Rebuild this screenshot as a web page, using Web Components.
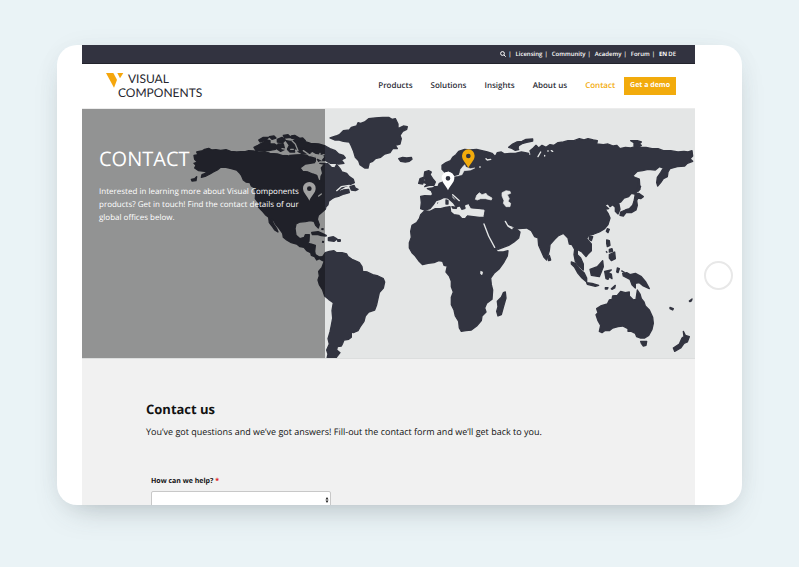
<!DOCTYPE html>
<html lang="en">
<head>
<meta charset="utf-8">
<meta name="viewport" content="width=device-width, initial-scale=1">
<title>Contact - Visual Components</title>
<style>
  :root {
    --dark: #323340;
    --accent: #f2ab0c;
    --land: #323440;
    --sea: #e4e6e6;
  }
  * { box-sizing: border-box; }
  body {
    margin: 0;
    height: 100vh;
    padding: 45px 57px 62px;
    background: #eaf3f6;
    font-family: "Open Sans", "Noto Sans", sans-serif;
    text-rendering: geometricPrecision;
    color: #111;
  }
</style>
</head>
<body>
  <tablet-frame>
    <top-bar></top-bar>
    <site-header></site-header>
    <contact-hero>
      <h1 slot="title">CONTACT</h1>
      <p slot="text">Interested in learning more about Visual Components products? Get in touch! Find the contact details of our global offices below.</p>
    </contact-hero>
    <contact-form>
      <h2 slot="title">Contact us</h2>
      <p slot="intro">You’ve got questions and we’ve got answers! Fill-out the contact form and we’ll get back to you.</p>
    </contact-form>
  </tablet-frame>

<script>
class TabletFrame extends HTMLElement {
  connectedCallback() {
    this.attachShadow({ mode: 'open' });
    this.shadowRoot.innerHTML = `
      <style>
        :host {
          display: grid;
          grid-template-columns: 25px 1fr 47px;
          height: 100%;
          background: white;
          border-radius: 20px;
          box-shadow: 0 14px 32px -14px rgba(60, 70, 75, 0.34), 0 0 30px -10px rgba(60, 70, 75, 0.1);
        }
        .screen {
          grid-column: 2;
          overflow: hidden;
          background: #f1f1f1;
        }
        button {
          place-self: center;
          width: 29px;
          height: 29px;
          padding: 0;
          border: 2px solid #e8e8e8;
          border-radius: 50%;
          background: white;
        }
      </style>
      <div class="screen"><slot></slot></div>
      <button type="button" aria-label="Home"></button>
    `;
  }
}
customElements.define('tablet-frame', TabletFrame);

class TopBar extends HTMLElement {
  connectedCallback() {
    this.attachShadow({ mode: 'open' });
    this.shadowRoot.innerHTML = `
      <style>
        :host {
          display: block;
          background: var(--dark);
          border-bottom: 1px solid #22232c;
        }
        nav {
          display: flex;
          justify-content: flex-end;
          align-items: center;
          gap: 4px;
          height: 18px;
          padding-right: 19px;
          font-size: 6px;
          font-weight: 600;
          color: white;
        }
        a { color: inherit; text-decoration: none; }
        nav > a + span { margin-left: -2px; }
        .lang { display: flex; gap: 1px; }
        .lang b { font-weight: 700; }
        svg { display: block; }
      </style>
      <nav aria-label="Secondary">
        <a href="#search" aria-label="Search">
          <svg width="6" height="6" viewBox="0 0 12 12" fill="none" stroke="currentColor" stroke-width="2">
            <circle cx="5" cy="5" r="3.8"/><path d="M8 8l3.4 3.4"/>
          </svg>
        </a>
        <span>|</span>
        <a href="#licensing">Licensing</a>
        <span>|</span>
        <a href="#community">Community</a>
        <span>|</span>
        <a href="#academy">Academy</a>
        <span>|</span>
        <a href="#forum">Forum</a>
        <span>|</span>
        <span class="lang"><a href="#en"><b>EN</b></a><a href="#de">DE</a></span>
      </nav>
    `;
  }
}
customElements.define('top-bar', TopBar);

class SiteHeader extends HTMLElement {
  connectedCallback() {
    this.attachShadow({ mode: 'open' });
    this.shadowRoot.innerHTML = `
      <style>
        :host {
          display: flex;
          justify-content: space-between;
          align-items: center;
          height: 45px;
          padding: 0 19px 0 24px;
          background: white;
          border-bottom: 1px solid #ececec;
        }
        .logo {
          display: grid;
          grid-template-columns: 12px auto;
          color: #26272f;
          font-family: Lato, "Noto Sans", sans-serif;
          font-size: 12px;
          line-height: 14px;
          text-decoration: none;
        }
        .logo svg { grid-row: 1 / 3; display: block; }
        .logo .top { padding-left: 10px; }
        nav {
          display: flex;
          align-items: center;
          gap: 18px;
          font-size: 8px;
          line-height: 18px;
          font-weight: 600;
        }
        nav a { color: #2c2d36; text-decoration: none; }
        nav a[aria-current] { color: var(--accent); }
        .demo {
          margin-left: -9px;
          padding: 0 6px;
          font-size: 7px;
          font-weight: 700;
          background: var(--accent);
        }
        nav a.demo { color: white; }
      </style>
      <a class="logo" href="#home">
        <svg width="18" height="17" viewBox="0 0 54 51" fill="#f5a60c">
          <path d="M0 3h22l11 20-9 24z"/><path d="M34 3h18l-10 16z"/>
        </svg>
        <span class="top">VISUAL</span>
        <span>COMPONENTS</span>
      </a>
      <nav aria-label="Main">
        <a href="#products">Products</a>
        <a href="#solutions">Solutions</a>
        <a href="#insights">Insights</a>
        <a href="#about">About us</a>
        <a href="#contact" aria-current="page">Contact</a>
        <a class="demo" href="#demo">Get a demo</a>
      </nav>
    `;
  }
}
customElements.define('site-header', SiteHeader);

class WorldMap extends HTMLElement {
  connectedCallback() {
    this.attachShadow({ mode: 'open' });
    this.shadowRoot.innerHTML = `
      <style>
        :host { display: block; background: var(--sea); }
        svg { display: block; width: 100%; }
        .land { fill: var(--land); stroke: var(--land); stroke-width: 4; stroke-linejoin: round; }
        .water { fill: var(--sea); stroke: var(--sea); stroke-width: 2; stroke-linejoin: round; }
        .line { fill: none; stroke: var(--sea); stroke-width: 4; stroke-linecap: round; }
      </style>
      <svg viewBox="0 0 1839 747" role="img" aria-label="World map with office locations">
        <defs>
          <path id="pin" fill-rule="evenodd" d="M0 0C-5-14-19-22-19-37a19 19 0 0 1 38 0C19-22 5-14 0 0zM0-43a7 7 0 1 0 0 14 7 7 0 0 0 0-14z"/>
        </defs>

        <!-- Americas -->
        <g transform="translate(324 -3)">
          <g class="land">
            <path d="M12 142L24 140 20 132 38 128 44 124 56 121 66 126 78 125 92 127 108 125 122 130 140 132 152 131 166 131 176 128 190 129 206 132 225 131 240 136 262 138 278 143 300 142 318 141 335 140 350 142 364 150 374 164 346 168 330 180 338 190 354 192 368 198 380 202 385 216 392 220 393 205 398 196 394 180 400 172 412 166 424 178 434 180 440 170 450 182 456 192 470 196 478 206 490 214 493 224 480 230 464 236 450 244 444 252 460 246 476 244 478 254 462 258 448 264 436 267 426 272 416 280 414 290 408 296 406 304 394 314 385 322 382 334 388 350 385 360 377 352 372 340 360 338 346 341 330 342 318 348 315 362 318 382 330 392 343 388 346 380 358 380 357 400 352 404 362 408 376 412 374 430 376 440 388 447 400 446 398 458 388 452 380 456 374 446 364 442 362 434 350 428 342 418 330 416 320 408 304 404 290 396 280 388 278 376 268 362 258 350 250 336 244 334 252 350 260 362 264 372 254 366 246 354 238 344 236 328 226 320 216 308 206 298 205 284 196 272 197 256 194 240 184 234 180 224 168 222 160 216 154 202 148 194 140 186 124 182 108 178 92 178 82 186 70 192 60 198 48 204 34 208 36 200 52 194 44 190 26 188 14 180 18 172 12 166 22 162 14 154Z"/>
            <path d="M20 206l-6 6-10 2 2 5 12-1z"/>
            <path d="M192 118l12-6 14-8 12-8 10 2 0 10 14 0 10 6-8 10-20 4-20-2-18 2z"/>
            <path d="M206 96l14-8 16 0-8 8-18 6zM238 86l14-2 6 6-12 4zM262 94l14-6 10 8-8 8-16-2zM280 82l14-2 8 8-18 2zM264 108l16 0 4 16-12 6-12-8zM288 98l14 2 18-4 12 6 16 0 14 4 24 2-2 12-22 2 2 10-22 4-8-10-20-4-14-8zM304 84l10-2 14 8-10 4-14-4zM322 92l16-2 8 8-16 2zM298 112l12 4 4 16-14 0-8-8zM326 118l18 4 16 14-22 2-14-8zM366 108l20 0 20 6 14 8 16 6 10 10 14 4 6 8-12 6 8 10-16 2-10-2-14 0-10-6-14-4 8-10-12-8-16-2-14-8zM382 154l12 6 10 0 4 10-18-4zM362 144l14 4 0 12-12-4z"/>
            <path d="M420 90L438 84 448 80 460 68 478 66 484 58 500 54 504 44 512 46 524 42 536 32 556 30 578 28 596 28 606 34 616 32 624 48 624 62 640 54 652 56 650 64 638 70 630 82 634 92 630 108 616 112 622 122 608 122 600 134 584 138 572 148 556 152 548 160 538 164 534 180 524 180 510 170 506 158 496 148 490 128 484 114 478 102 460 100 448 96 434 96Z"/>
            <path d="M626 152l12-4 12 2 14-2 2 6-8 6-12 2-14-2zM480 236l12-4 4 8 8 4-8 4-12-2z"/>
            <path d="M366 374l18-2 12 5 12 6-14-1-12-4-14 1zM416 390l14-3 10 6-8 6-16-2zM444 396l6 0 0 3-6 0zM394 363l7 1M396 401l6 1" stroke-width="6"/>
            <path d="M398 446L406 434 418 430 432 428 440 434 456 434 470 438 474 446 486 454 500 460 508 464 516 476 518 490 532 492 548 500 564 504 580 512 584 522 580 540 568 554 564 572 560 590 554 606 536 612 526 624 522 640 512 654 504 668 490 674 484 672 484 688 476 694 462 696 458 706 454 714 442 716 440 726 450 734 442 744 434 756 410 756 414 738 410 726 418 708 414 692 420 672 424 652 428 630 426 608 430 584 416 574 404 564 398 546 388 530 384 516 388 504 386 490 396 478 402 462Z"/>
          </g>
          <path class="line" d="M276 122l12 2-4 12 12 4M302 124l8 0M306 98l10 10 8 20M340 128l20 14 20 6 22-8M378 168l12-6 16 0M388 150l2-14"/>
          <path class="line" stroke-width="2" d="M386 264l8-6M440 248l14-12 24-4"/>
        </g>

        <!-- Europe, Africa and mainland Asia -->
        <g transform="translate(924 -3)">
          <g class="land">
            <path d="M92 265L104 263 124 264 128 258 124 248 112 242 128 240 134 236 144 236 148 226 158 222 162 206 170 202 190 208 206 206 216 198 222 188 230 184 234 178 226 176 218 172 212 184 206 198 194 202 184 200 178 188 164 192 156 184 156 172 168 164 182 158 188 148 198 140 206 130 224 124 240 126 260 124 276 128 292 132 306 136 316 146 322 134 334 132 344 138 360 136 376 136 394 132 406 134 416 136 414 144 424 140 420 128 430 120 438 112 446 120 456 112 468 118 480 110 492 112 504 104 520 102 534 98 552 98 568 92 582 96 594 92 610 96 622 98 620 108 640 110 654 108 670 114 680 112 690 122 706 118 722 120 736 116 752 118 768 118 786 122 804 122 820 128 842 128 864 132 882 130 894 132 906 128 908 144 900 152 908 160 892 166 884 174 862 176 840 182 834 192 832 206 820 212 812 224 803 234 800 224 802 208 812 194 820 180 808 176 796 186 774 184 758 188 742 190 728 204 738 210 748 214 744 228 752 236 742 250 734 258 724 256 716 266 702 270 692 282 686 284 690 304 684 318 676 310 676 298 668 290 660 296 654 286 644 292 656 302 646 304 654 316 660 330 654 350 644 362 628 372 612 378 596 382 590 392 604 408 604 428 594 438 588 446 576 432 562 424 562 440 572 450 580 468 580 486 566 474 556 460 552 440 554 424 546 410 538 408 534 390 520 376 504 384 494 394 480 410 478 428 474 442 470 456 462 448 454 430 446 412 444 390 434 386 424 368 410 360 386 362 372 356 356 350 346 338 352 354 362 362 376 360 390 372 386 390 372 402 356 412 340 418 324 424 316 420 304 396 292 370 283 348 284 330 282 322 286 306 274 304 260 300 248 302 240 298 238 286 230 288 222 292 226 302 216 304 210 294 204 282 190 264 180 262 190 274 206 286 208 294 198 296 190 284 174 270 162 268 150 274 138 278 130 290 120 302 104 306 92 302 94 284Z"/>
            <path d="M104 308L120 310 136 302 152 302 166 298 180 296 182 312 192 320 206 322 216 332 226 332 232 324 250 326 268 328 281 328 284 350 298 382 312 410 322 432 340 432 354 428 352 444 342 462 328 482 312 496 302 510 304 530 308 546 306 574 290 586 284 600 288 612 276 624 274 638 260 654 244 666 228 668 214 670 208 660 206 640 196 624 192 606 184 590 184 568 190 552 184 536 184 520 178 504 168 492 172 474 162 472 158 460 146 458 132 464 114 466 98 470 86 458 76 444 66 434 58 420 58 404 64 388 62 370 66 352 80 344 88 332 92 320Z"/>
            <path d="M346 552l2 18-8 28-6 22-10 4-4-14 4-14-2-16 12-12 6-14zM104 192l12-4 8 4-4 8 8 12 8 10-4 10-14 0-14 4 8-8-10-4 6-8-6-8zM90 212l10-4 2 8-4 12-12-2zM168 276l6 2 0 10-6 0zM186 296l14 2-2 4-10-2zM142 284l2 2"/>
            <path d="M356 118l12-10 12-6 16-2 12-6 20-1 0 6-18 4-14 4-10 6-2 8 2 4-10 2-10-6z"/>
            <path d="M478 442l4 14-6 2-2-10z"/>
          </g>
          <g class="water">
            <path d="M256 274l4-12 8-8 8 6 12-4 4 6 14 8-2 6-18-4-14 0-10 4z"/>
            <path d="M336 254l12-6 12 2 2 6-10 4 6 12-4 8 8 6-2 10-12 0-8-10 2-8-6-14z"/>
            <path d="M194 304l18 4 12-2 12-14 6 10 16 2 24 2-2 16-26-2-20-2-8 8-8-2-8-8-14-4z"/>
            <path d="M212 184l12-14 4 8 14 4 12-2-12 6-20 2-6 12-8 2zM272 490l6 2-2 8-4-2z"/>
          </g>
          <path class="line" d="M282 348q12 38 32 70M346 340l8 14 12 8M288 152l4 4 10-2M188 260l20 18M270 176l0 2M444 146l8-14M464 142l0 2M474 128l0 2M484 128l4 2"/>
        </g>

        <!-- Pacific Asia and Oceania -->
        <g class="land" transform="translate(1374 -3)">
          <path d="M272 98l20 0 12 4-6 6 6 4-10 6-12-4 0-10zM286 256l10 0 14 10-8 6-8-2-4 8 2 14-4 14-14 8-16 0-8 10-10-2 2-10 14-6 12-4 10-10 4-12 2-10zM290 210l8 4 2 30-6 6-4-12zM202 362l6 2-4 10-5-4zM148 384l10 2-4 12-6-4z"/>
          <path d="M200 396l8 2 2 14-8 4-2-10zM208 424l8-2 2 8-10 2zM198 430l4 4M208 440l16-8 2 20-12 6-6-8zM188 458l2 18-12 30-24-4-4-18 22-8zM194 490l20-4-10 8 10 4 2 14-8-6-4 8-6-2zM232 480l6 2-4 12-4-2zM244 488l10 6M94 462l12 4 10 14 16 14 8 16 0 12-14-12-12-14-10-18-10-10zM140 524l16 2 20 6-10 3-24-6zM196 539l8 0-2 4-6 0zM214 542l12-10-2 8-8 4z"/>
          <path d="M248 496l12-2 10 6 16-4 18 10 12 14 12 22-18-8-12-10-12 2 0 14-10-10-6-16-20-10z"/>
          <path d="M170 602L182 594 202 588 208 576 216 574 218 564 232 562 242 550 256 554 268 552 268 564 280 576 288 574 292 546 300 558 304 572 312 582 316 594 328 606 338 628 340 646 336 664 326 682 314 690 302 690 290 686 286 676 274 670 264 670 264 662 248 654 234 656 218 660 208 668 194 668 186 674 178 670 182 652 174 638 168 620 174 614Z"/>
          <path d="M302 700l18 0-2 12-8 2-6-8zM430 670l6 12 12 4-6 16-10 4-10 14-18 10-4-10 18-12 8-18 6-4zM390 598l10 4-2 4-8-4zM448 579l8-6-2 6-4 2z"/>
        </g>

        <use href="#pin" x="682" y="275" fill="#fff"/>
        <use href="#pin" x="1098" y="244" fill="#fff"/>
        <use href="#pin" x="1159" y="177" fill="#f2ab0c"/>
      </svg>
    `;
  }
}
customElements.define('world-map', WorldMap);

class ContactHero extends HTMLElement {
  connectedCallback() {
    this.attachShadow({ mode: 'open' });
    this.shadowRoot.innerHTML = `
      <style>
        :host {
          display: grid;
          grid-template-columns: 243fr 370fr;
          border-bottom: 1px solid #dcdede;
        }
        world-map { grid-area: 1 / 1 / 2 / 3; }
        .panel {
          grid-area: 1 / 1;
          z-index: 1;
          padding: 36px 24px 0 17px;
          background: rgba(0, 0, 0, 0.36);
          color: white;
        }
        ::slotted(h1) {
          margin: 0;
          font-size: 20px;
          line-height: 28px;
          font-weight: 400;
        }
        ::slotted(p) {
          margin: 12px 0 0;
          font-size: 8px;
          line-height: 13px;
          font-weight: 500;
        }
      </style>
      <world-map></world-map>
      <div class="panel">
        <slot name="title"></slot>
        <slot name="text"></slot>
      </div>
    `;
  }
}
customElements.define('contact-hero', ContactHero);

class ContactForm extends HTMLElement {
  connectedCallback() {
    this.attachShadow({ mode: 'open' });
    this.shadowRoot.innerHTML = `
      <style>
        :host { display: block; padding: 40px 64px; }
        ::slotted(h2) {
          margin: 0;
          font-size: 13px;
          line-height: 20px;
          font-weight: 700;
        }
        ::slotted(p) {
          margin: 6px 0 0;
          font-size: 9px;
          line-height: 13px;
        }
        form {
          display: flex;
          flex-direction: column;
          gap: 4px;
          width: 180px;
          margin: 39px 0 0 5px;
        }
        label {
          font-size: 7px;
          line-height: 10px;
          font-weight: 700;
        }
        .required { color: #e02020; }
        .field { display: grid; }
        select {
          grid-area: 1 / 1;
          appearance: none;
          width: 100%;
          height: 18px;
          border: 1px solid #c8c8c8;
          border-radius: 2px;
          background: white;
          font: inherit;
        }
        svg {
          grid-area: 1 / 1;
          place-self: center end;
          margin-right: 2px;
          pointer-events: none;
        }
      </style>
      <slot name="title"></slot>
      <slot name="intro"></slot>
      <form>
        <label for="topic">How can we help? <span class="required">*</span></label>
        <div class="field">
          <select id="topic" required><option value=""></option></select>
          <svg width="4" height="6" viewBox="0 0 8 12" fill="#222"><path d="M4 0l3 5H1zM4 12l3-5H1z"/></svg>
        </div>
      </form>
    `;
  }
}
customElements.define('contact-form', ContactForm);
</script>
</body>
</html>
